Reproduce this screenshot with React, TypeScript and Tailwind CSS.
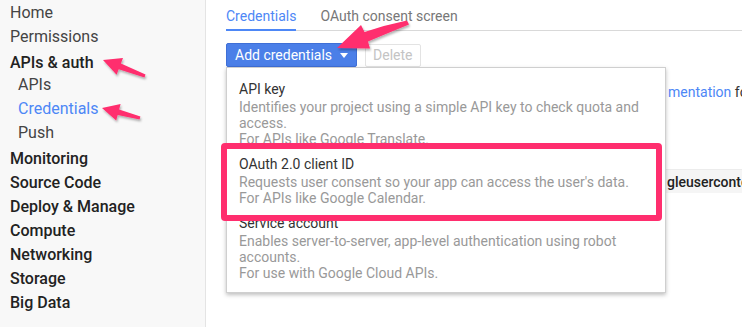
import React from 'react';

const navItems = [
  { label: 'Home', kind: 'plain' },
  { label: 'Permissions', kind: 'plain' },
  { label: 'APIs & auth', kind: 'group', gap: true },
  { label: 'APIs', kind: 'sub' },
  { label: 'Credentials', kind: 'active' },
  { label: 'Push', kind: 'sub' },
  { label: 'Monitoring', kind: 'group', gap: true },
  { label: 'Source Code', kind: 'group' },
  { label: 'Deploy & Manage', kind: 'group' },
  { label: 'Compute', kind: 'group' },
  { label: 'Networking', kind: 'group' },
  { label: 'Storage', kind: 'group' },
  { label: 'Big Data', kind: 'group' },
];

const options = [
  {
    title: 'API key',
    lines: ['Identifies your project using a simple API key to check quota and access.', 'For APIs like Google Translate.'],
  },
  {
    title: 'OAuth 2.0 client ID',
    lines: ["Requests user consent so your app can access the user's data.", 'For APIs like Google Calendar.'],
  },
  {
    title: 'Service account',
    lines: ['Enables server-to-server, app-level authentication using robot accounts.', 'For use with Google Cloud APIs.'],
  },
];

const Sidebar = () => (
  <aside className="w-[206px] shrink-0 h-[327px] pt-px bg-[#f8f8f8] border-r border-[#e4e4e4]">
    {navItems.map((item) => {
      let cls = 'h-6 leading-6 pl-[10px] text-[#444]';
      if (item.kind === 'group') cls = 'h-6 leading-6 pl-[10px] text-[#222] font-medium';
      if (item.kind === 'sub') cls = 'h-6 leading-6 pl-[18px] text-[#444]';
      if (item.kind === 'active') cls = 'h-6 leading-6 pl-[18px] text-[#4d87f6]';
      return (
        <div key={item.label} className={`${cls} ${item.gap ? 'mt-[2px]' : ''} ${item.label === 'APIs & auth' ? 'h-[22px]' : ''}`}>
          {item.label}
        </div>
      );
    })}
  </aside>
);

const Arrows = () => (
  <svg className="absolute inset-0 pointer-events-none" width="742" height="327" viewBox="0 0 742 327">
    <defs>
      <filter id="sh" x="-20%" y="-20%" width="140%" height="160%">
        <feDropShadow dx="1" dy="2" stdDeviation="1.2" floodColor="#000" floodOpacity="0.3" />
      </filter>
    </defs>
    <g fill="#ff2e6e" filter="url(#sh)">
      <polygon points="103,60 123,58 120.9,63.6 145.5,74.6 144.5,77.4 118.7,69.2 116.6,74.8" />
      <polygon points="102,108 120.6,104.1 119.1,109.6 140.4,116.6 139.6,119.4 117.7,115 116.2,120.5" />
      <path d="M337,48 L361,25 L364.5,32 Q385,25 407,20.5 L409,24.5 Q388,33 368,41.5 L370,48.5 Z" />
    </g>
  </svg>
);

const Main = () => (
  <main className="relative flex-1 h-[327px] bg-white pl-5 overflow-hidden">
    <div className="flex gap-6 h-[31px] border-b border-[#d9d9d9] text-[14px]">
      <div className="pt-[6px] h-[31px] leading-5 text-[#4d87f6] border-b-2 border-[#4d87f6]">Credentials</div>
      <div className="pt-[6px] leading-5 text-[#777]">OAuth consent screen</div>
    </div>

    <div className="flex gap-2 mt-3 h-6 text-[14px]">
      <button className="flex items-center gap-2 h-6 px-2 rounded-[2px] bg-[#4b7fe8] border border-[#3f6fd6] text-white">
        <span>Add credentials</span>
        <svg width="8" height="5" viewBox="0 0 8 5"><path d="M0 0h8L4 5z" fill="#fff" /></svg>
      </button>
      <button className="h-[23px] mt-px px-[7px] rounded-[2px] border border-[#e3e3e3] text-[#c4c4c4]">Delete</button>
    </div>

    <div className="mt-[15px] pl-[442px] whitespace-nowrap text-[14px] leading-5">
      <span className="text-[#4d87f6]">mentation</span>
      <span className="text-[#333]"> for details</span>
    </div>

    <div className="mt-[67px] ml-[440px] h-6 pl-px bg-[#f5f5f5] border-t border-[#ececec] text-[14px] leading-6 font-medium text-[#222] whitespace-nowrap">
      gleuserconte
    </div>

    <div className="absolute left-5 top-[67px] w-[440px] h-[226px] bg-white border border-[#cfcfcf] shadow-[0_2px_4px_rgba(0,0,0,0.25)] pt-[7px] px-[12px]">
      {options.map((o) => (
        <div key={o.title} className="pt-1 pb-[3px]">
          <div className="text-[14px] leading-5 text-[#333]">{o.title}</div>
          {o.lines.map((l) => (
            <div key={l} className="text-[14px] leading-4 text-[#999]">{l}</div>
          ))}
        </div>
      ))}
    </div>

    <div className="absolute left-[15px] top-[143px] w-[441px] h-[78px] border-[6px] border-[#ff2e6e] rounded-[4px]" />
  </main>
);

export default function App() {
  return (
    <div className="relative flex w-[742px] h-[327px] overflow-hidden bg-white" style={{ fontFamily: 'Roboto, "Liberation Sans", sans-serif' }}>
      <Sidebar />
      <Main />
      <Arrows />
    </div>
  );
}
